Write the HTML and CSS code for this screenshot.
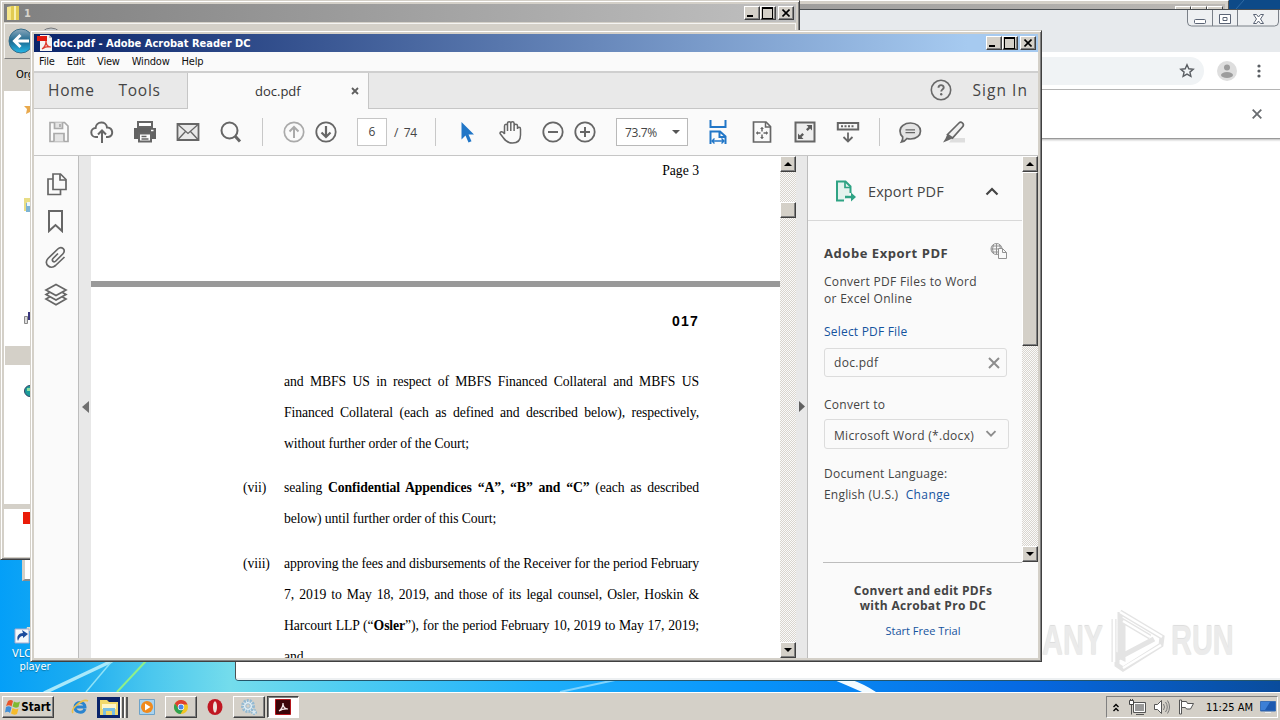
FILE: index.html
```html
<!DOCTYPE html>
<html lang="en">
<head>
<meta charset="utf-8">
<title>doc.pdf - Adobe Acrobat Reader DC</title>
<link rel="stylesheet" href="styles.css">
</head>
<body>
<main class="desktop">
  <svg class="wallpaper" width="1280" height="692" viewBox="0 0 1280 692">
    <defs>
      <linearGradient id="sky" x1="0" x2="1" y1="0" y2="0">
        <stop offset="0" stop-color="#049ff8"/><stop offset=".06" stop-color="#1cacf0"/><stop offset=".12" stop-color="#4cc8ee"/><stop offset=".18" stop-color="#74dcec"/><stop offset=".27" stop-color="#4fcdf2"/><stop offset=".42" stop-color="#1fb0fb"/><stop offset=".58" stop-color="#0895fb"/><stop offset=".8" stop-color="#0669e2"/><stop offset="1" stop-color="#0a4c9c"/>
      </linearGradient>
    </defs>
    <rect width="1280" height="692" fill="url(#sky)"/>
    <path d="M1229 0h51v12h-51z" fill="#0d4a88"/>
    <path d="M1236 9l8-9" stroke="#2f6ba5"/>
    <path d="M44 693L112 661" stroke="#a9e9fb" stroke-width="3.500"/>
    <path d="M86 692L112 661" stroke="#8fe2f7" stroke-width="1.500"/>
    <path d="M117 692L146 661" stroke="#8ff08a" stroke-width="2"/>
    <path d="M560 692l55-12" stroke="#7fd3fd" stroke-width="2"/>
    <path d="M834 680q10 4 28 12h14q-12-8-24-12z" fill="#f2fbff"/>
  </svg>

  <div class="vlc">
    <svg width="26" height="32" viewBox="0 0 26 32"><path d="M17 2l8-2v26h-9z" fill="#d98233"/><path d="M13 12h12v4H12z" fill="#e5e0d0"/><path d="M1 14h14v14H1z" fill="#f4f8fb" stroke="#aac"/><path d="M4 26c-2-5 1-8 5-8l-1-3 6 4-5 4v-2c-3 0-4 2-5 5z" fill="#1c4c9c"/></svg>
    <span>VLC media<br>player</span>
  </div>

  <section class="win back"><div class="back-title"><i></i><i></i><i></i></div></section>

  <section class="win chrome">
    <div class="chrome-tabs">
      <div class="aero">
        <svg width="92" height="17" viewBox="0 0 92 17"><path d="M.5 0v12q0 4 4 4h83q4 0 4-4V0M25.500 0v16M50.500 0v16" fill="#eef0f2" stroke="#7a8088"/><rect x="7.500" y="9.500" width="11" height="4" rx="1" fill="#fff" stroke="#5b6475"/><path d="M32.500 4.500h11v9h-11zM36 7.500h4v3h-4z" fill="#fff" stroke="#5b6475"/><path d="M66.500 4.500h3l2 2.500 2-2.500h3l-3 4.500 3 4.500h-3l-2-2.500-2 2.500h-3l3-4.500z" fill="#fff" stroke="#5b6475"/></svg>
      </div>
    </div>
    <div class="chrome-bar">
      <div class="omnibox"><svg width="16" height="16" viewBox="0 0 16 16"><path d="M8 1.800l1.800 4 4.400.4-3.300 2.900 1 4.300L8 11.100l-3.900 2.300 1-4.300-3.300-2.900 4.400-.4z" fill="none" stroke="#5a5e63" stroke-width="1.400"/></svg></div>
      <svg class="avatar" width="20" height="20" viewBox="0 0 20 20"><circle cx="10" cy="10" r="10" fill="#dedede"/><circle cx="10" cy="6.500" r="3" fill="#9c9c9c"/><ellipse cx="10" cy="14" rx="6" ry="3" fill="#9c9c9c"/></svg>
      <svg class="dots" width="4" height="16" viewBox="0 0 4 16" fill="#5a5e63"><circle cx="2" cy="3" r="1.600"/><circle cx="2" cy="8" r="1.600"/><circle cx="2" cy="13" r="1.600"/></svg>
    </div>
    <div class="infobar"><svg width="10" height="10" viewBox="0 0 10 10"><path d="M.7.7l8.600 8.600M9.300.7L.7 9.300" stroke="#696c70" stroke-width="1.800"/></svg></div>
    <div class="chrome-page"></div>
  </section>

  <section class="win third"></section>

  <section class="win explorer">
    <div class="ex-title">
      <svg width="14" height="16" viewBox="0 0 14 16"><path d="M1 2l5-1v14H1z" fill="#f6e68a"/><path d="M5 1h8v14H5z" fill="#e2cb52"/><path d="M8 1h2v14H8z" fill="#f8efae"/></svg>
      <span>1</span>
      <div class="ctl"><b class="min"></b><b class="max"></b><b class="cls"><svg width="8" height="8" viewBox="0 0 8 8"><path d="M.5.500l7 7M7.500.500l-7 7" stroke="#000" stroke-width="1.600"/></svg></b></div>
    </div>
    <div class="ex-nav"><svg width="56" height="32" viewBox="0 0 56 32"><defs><linearGradient id="orb" x2="0" y2="1"><stop offset="0" stop-color="#8aa7bb"/><stop offset=".5" stop-color="#1c688f"/><stop offset="1" stop-color="#25b9ea"/></linearGradient></defs><circle cx="46" cy="16" r="12" fill="#c3c9cd" stroke="#77797c"/><circle cx="16" cy="17" r="12" fill="url(#orb)" stroke="#356d8a"/><path d="M24 17H10M15.500 11L9.500 17l6 6" fill="none" stroke="#fff" stroke-width="3"/></svg></div>
    <div class="ex-cmd">Organize</div>
    <div class="ex-side">
      <svg class="e1" width="8" height="12" viewBox="0 0 8 12"><path d="M8 0L6 4 0 4l3 3-1 5 6-3z" fill="#e9a94c"/></svg>
      <svg class="e2" width="8" height="14" viewBox="0 0 8 14"><path d="M0 0h8v13H0z" fill="#e8dd86"/><path d="M2 5h6v9H2z" fill="#7db4d4"/><path d="M3 4h5v4H3z" fill="#eef7fb"/></svg>
      <svg class="e3" width="8" height="14" viewBox="0 0 8 14"><path d="M.5 5.500h3v7h-3z" fill="#ddd" stroke="#888"/><path d="M4 1h4v8H4z" fill="#39367e"/></svg>
      <div class="e4"></div>
      <svg class="e5" width="8" height="12" viewBox="0 0 8 12"><circle cx="6" cy="6" r="5.500" fill="#1b9a9a" stroke="#346"/><path d="M3 3h3v3H3z" fill="#8fe0a0"/></svg>
    </div>
    <div class="ex-detail"><i></i></div>
  </section>

  <section class="win acrobat">
    <div class="ac-title">
      <svg width="16" height="16" viewBox="0 0 16 16"><path d="M3 0h9l3 3v13H3z" fill="#f4f2f1"/><path d="M12 0v3h3z" fill="#bbb"/><path d="M0 1h10v5H0z" fill="#e1190d"/><path d="M5 14c3-2 4-5 4-8 0 4 2 6 5 6-4-1-6 0-9 2z" fill="none" stroke="#e03a2c" stroke-width="1.200"/></svg>
      <span>doc.pdf - Adobe Acrobat Reader DC</span>
      <div class="ctl"><b class="min"></b><b class="max"></b><b class="cls"><svg width="8" height="8" viewBox="0 0 8 8"><path d="M.5.500l7 7M7.500.500l-7 7" stroke="#000" stroke-width="1.600"/></svg></b></div>
    </div>
    <nav class="menu"><span>File</span><span>Edit</span><span>View</span><span>Window</span><span>Help</span></nav>
    <div class="tabs">
      <div class="home"><span>Home</span><span>Tools</span></div>
      <div class="tab"><span>doc.pdf</span><svg width="8" height="8" viewBox="0 0 8 8"><path d="M1 1l6 6M7 1L1 7" stroke="#5f5f5f" stroke-width="1.800"/></svg></div>
      <div class="signin"><svg width="22" height="22" viewBox="0 0 22 22"><circle cx="11" cy="11" r="9.700" fill="none" stroke="#696969" stroke-width="1.600"/><path d="M8.500 8.700c0-3.400 5.200-3.300 5.200-.3 0 2-2.500 2-2.500 4.200" fill="none" stroke="#696969" stroke-width="1.900"/><circle cx="11.200" cy="15.200" r="1.200" fill="#696969"/></svg><span>Sign In</span></div>
    </div>
    <div class="tools">
      <svg viewBox="0 0 24 24" class="lite"><path d="M3 2.500h14.500L21 6v15.500H3z"/><path d="M7.500 2.500v6h8v-6M7 21.500v-8h10v8" fill="#e4e4e4"/><path d="M13 4v3"/></svg>
      <svg viewBox="0 0 24 24" class="bold"><path d="M8 17H6a4.500 4.500 0 0 1-.4-9C6 1 16.500.800 17 7.500c6.500-.5 7 9.500 1 9.500h-2M12 23V11M8 14.500l4-4 4 4"/></svg>
      <svg viewBox="0 0 24 24"><path d="M5 2h14v5H5z" fill="#fff" stroke-width="2"/><path d="M1 8h22v11H1z" fill="#626262" stroke="none"/><path d="M6 13.500h12v8H6z" fill="#fff" stroke-width="2"/><path d="M8.500 16.500h5M8.500 19h7"/><path d="M18 10.500h2.500" stroke="#fff"/></svg>
      <svg viewBox="0 0 24 24"><path d="M1.500 4h21v16h-21z" fill="#e9e9e9" stroke-width="1.800"/><path d="M2 4.500l10 9 10-9M2 19.500l7.500-8M22 19.500l-7.500-8" stroke-width="1.300"/></svg>
      <svg viewBox="0 0 24 24"><circle cx="10.500" cy="10.500" r="8" stroke-width="2"/><path d="M16 16l5 5.500" stroke-width="3"/></svg>
      <hr>
      <svg viewBox="0 0 24 24" class="lite"><circle cx="12" cy="12" r="9.700"/><path d="M12 18V7M7.500 11.500L12 7l4.500 4.500" stroke-width="2"/></svg>
      <svg viewBox="0 0 24 24" class="g8"><circle cx="12" cy="12" r="9.700" stroke-width="1.800"/><path d="M12 6v11M7.500 12.500L12 17l4.500-4.500" stroke-width="2.200"/></svg>
      <div class="pageno">6</div>
      <div class="total">/&nbsp; 74</div>
      <hr class="g11">
      <svg viewBox="0 0 24 24"><path d="M6.500 2v17.500l4-4 3 7 3-1.300-3-6.700h5.500z" fill="#2176c7" stroke="none"/></svg>
      <svg viewBox="0 0 24 24"><path d="M6.500 14V6c0-2.400 3-2.400 3 0v5V3.500c0-2.400 3.300-2.400 3.300 0V11 3.500c0-2.200 3.300-2.200 3.300 0V11 6c0-2.200 3.400-2.200 3.400 0v3c0-2.200 3-2.200 3 0v6C22.500 21 19 23 14.500 23c-5 0-7-2-9-5L2 13.500c0-2.500 3-2.300 4.500.5z"/></svg>
      <svg viewBox="0 0 24 24"><circle cx="12" cy="12" r="9.700" stroke-width="1.800"/><path d="M7 12h10" stroke-width="2"/></svg>
      <svg viewBox="0 0 24 24" class="g8"><circle cx="12" cy="12" r="9.700" stroke-width="1.800"/><path d="M7 12h10M12 7v10" stroke-width="2"/></svg>
      <div class="zoombox"><span>73.7%</span><svg viewBox="0 0 8 4"><path d="M0 0h8L4 4z" fill="#555" stroke="none"/></svg></div>
      <svg viewBox="0 0 24 24" class="blue"><path d="M4.500 0v7h15V0M4.500 24V11.500h9.500l5.500 5V24M13.500 11.500v5.500h6"/><path d="M6.500 21h11M8.500 18.500L6 21l2.500 2.500M15.500 18.500L18 21l-2.500 2.500" stroke-width="1.400"/></svg>
      <svg viewBox="0 0 24 24" class="g20"><path d="M3.500 2h12.500l4.500 4.500V22h-17z" stroke-width="1.700"/><path d="M15.500 2v5h5" /><path d="M12 7.500v11M6.500 13h11" stroke-dasharray="4 3"/><path d="M10 9l2-2 2 2zM10 17l2 2 2-2zM8 11l-2 2 2 2zM16 11l2 2-2 2z" fill="#666" stroke="none"/></svg>
      <svg viewBox="0 0 24 24"><path d="M2.500 2.500h19v19h-19z" fill="#eee" stroke-width="2"/><path d="M13.500 5H19v5.500l-1.900-1.900-2.400 2.400-1.700-1.700 2.400-2.400zM10.500 19H5v-5.500l1.900 1.900 2.400-2.400 1.700 1.700-2.400 2.400z" fill="#5a5a5a" stroke="none"/></svg>
      <svg viewBox="0 0 24 24"><path d="M1.800 3h20.400v6.500H1.800z" stroke-width="2"/><path d="M5 6.200h14" stroke-dasharray="2 1.500" stroke-width="2"/><path d="M12 12.500V21M7.500 17l4.500 4.500 4.500-4.500" stroke-width="1.800"/></svg>
      <hr>
      <svg viewBox="0 0 24 24" class="g18"><path d="M12.500 3c6 0 10 3.500 10 8s-4 8-10 8c-1.500 0-2.500-.2-3.500-.5-1.500 2-3.500 3.200-5.500 3.500 1-1.500 1.500-3 1.200-5C3 15.500 2 13.500 2 11c0-4.500 4.500-8 10.500-8z" fill="#e4e4e4" stroke-width="1.700"/><path d="M7.500 9.800h9.500M7.500 12.600h9.500" stroke-width="1.300"/></svg>
      <svg viewBox="0 0 24 24" class="g20"><path d="M10 18h13v4.500H7z" fill="#dedede" stroke="none"/><path d="M5.500 14.500L17 3c2-2 5.500.5 4 3.300L10.500 18z" fill="#f1f1f1" stroke-width="1.700"/><path d="M5.200 14.500l5 4L6 20.500l-5 2 2.500-4z" fill="#666" stroke="none"/></svg>
    </div>
    <div class="body">
      <aside class="rail">
        <svg viewBox="0 0 24 24"><path d="M9 2h7.500L22 7.500v10H9z"/><path d="M16 2v6h6M9 7H4v15.500h12.500v-5"/></svg>
        <svg viewBox="0 0 24 24"><path d="M5 2h13v20l-6.500-6L5 22z" stroke-width="2"/></svg>
        <svg viewBox="0 0 24 24"><path d="M14 7.500l-5 5c-2 2 .8 4.500 2.800 2.500l7-7c4-4-1.300-8.500-5-5L4 12.500c-5 5.500 2.500 11.500 7.500 7L20.500 11"/></svg>
        <svg viewBox="0 0 24 24"><path d="M12 1.500L22 7l-10 5.500L2 7z"/><path d="M5.500 9.500L2 11.500l10 5.500 10-5.500-3.500-2M5.500 14L2 16l10 5.700L22 16l-3.500-2"/></svg>
      </aside>
      <div class="grip"><svg width="7" height="12" viewBox="0 0 7 12"><path d="M7 0v12L0 6z" fill="#707070"/></svg></div>
      <article class="doc">
        <div class="page first"><p class="head">Page 3</p></div>
        <div class="page second">
          <p class="num">017</p>
          <div class="item"><span></span><div>
            <p class="j">and MBFS US in respect of MBFS Financed Collateral and MBFS US</p>
            <p class="j">Financed Collateral (each as defined and described below), respectively,</p>
            <p>without further order of the Court;</p></div></div>
          <div class="item"><span>(vii)</span><div>
            <p class="j">sealing <strong>Confidential Appendices “A”, “B” and “C”</strong> (each as described</p>
            <p>below) until further order of this Court;</p></div></div>
          <div class="item"><span>(viii)</span><div>
            <p class="j tight">approving the fees and disbursements of the Receiver for the period February</p>
            <p class="j">7, 2019 to May 18, 2019, and those of its legal counsel, Osler, Hoskin &amp;</p>
            <p class="j">Harcourt LLP (“<strong>Osler</strong>”), for the period February 10, 2019 to May 17, 2019;</p>
            <p>and</p></div></div>
        </div>
      </article>
      <div class="scroll"><b><svg width="8" height="4" viewBox="0 0 8 4"><path d="M0 4h8L4 0z"/></svg></b><i class="thumb"></i><b><svg width="8" height="4" viewBox="0 0 8 4"><path d="M0 0h8L4 4z"/></svg></b></div>
      <div class="grip right"><svg width="6" height="11" viewBox="0 0 6 11"><path d="M0 0v11l6-5.500z" fill="#606060"/></svg></div>
      <aside class="export">
        <div class="ex-top">
          <div class="ex-main">
            <header>
              <svg width="24" height="24" viewBox="0 0 24 24"><path d="M10 21.500H3v-19h8.500l5 5V14" fill="#e4f3ee" stroke="#2fa384" stroke-width="2"/><path d="M11 3v5.500h5.500" fill="none" stroke="#2fa384" stroke-width="1.700"/><path d="M11 18h8" fill="none" stroke="#2fa384" stroke-width="2.500"/><path d="M17 13.500l5 4.500-5 4.500z" fill="#2fa384"/></svg>
              <h2>Export PDF</h2>
              <svg width="14" height="9" viewBox="0 0 14 9"><path d="M1.500 7.500L7 2l5.500 5.500" fill="none" stroke="#444" stroke-width="2.200"/></svg>
            </header>
            <div class="ex-form">
              <div class="row1"><h3>Adobe Export PDF</h3><svg width="18" height="16" viewBox="0 0 18 16" fill="none" stroke="#929292"><circle cx="6.500" cy="6" r="5.500"/><path d="M1 6h11M6.500.500v11M3.500 1.500q-2 4.500 0 9M9.500 1.500q2 4.500 0 9M2 3h9M2 9h9"/><path d="M8.500 5.500h4l4 4v6h-8z" fill="#fafafa"/><path d="M12.500 5.500v4h4"/></svg></div>
              <p class="desc">Convert PDF Files to Word<br>or Excel Online</p>
              <a>Select PDF File</a>
              <div class="field"><span>doc.pdf</span><svg width="12" height="12" viewBox="0 0 12 12"><path d="M1 1l10 10M11 1L1 11" stroke="#8d8d8d" stroke-width="2"/></svg></div>
              <p class="lbl">Convert to</p>
              <div class="field sel"><span>Microsoft Word (*.docx)</span><svg width="12" height="8" viewBox="0 0 12 8"><path d="M1.500 1.200L6 5.700l4.500-4.500" fill="none" stroke="#8d8d8d" stroke-width="1.900"/></svg></div>
              <p class="lbl2">Document Language:</p>
              <p class="lang">English (U.S.) <a>Change</a></p>
            </div>
          </div>
          <div class="scroll side"><b><svg width="8" height="4" viewBox="0 0 8 4"><path d="M0 4h8L4 0z"/></svg></b><i class="thumb"></i><b><svg width="8" height="4" viewBox="0 0 8 4"><path d="M0 0h8L4 4z"/></svg></b></div>
        </div>
        <footer><strong>Convert and edit PDFs<br>with Acrobat Pro DC</strong><a>Start Free Trial</a></footer>
      </aside>
    </div>
  </section>

  <div class="mark">
    <span>ANY</span>
    <svg width="58" height="66" viewBox="0 0 58 66"><path d="M12 4l42 25-1 8-38 24-6-4V47l6 3V13l27 16M6 11v43M12 4v45l34-18" fill="none" stroke="#e4e4e4" stroke-width="5"/><path d="M12 4l42 25M15 13l27 16M6 11v43M15 60l38-23" fill="none" stroke="#fff" stroke-width="2.500"/></svg>
    <span>RUN</span>
  </div>
</main>

<footer class="taskbar">
  <div class="btn start"><svg width="16" height="16" viewBox="0 0 16 16"><path d="M3 2q3-2 5 0L6.500 7.500q-2-2-5.500-.5z" fill="#e8552a"/><path d="M9 2.500q3 2 6 0L13.500 8q-3 1.500-6-.5z" fill="#7fb932"/><path d="M1 8q3-1.500 5.500.5L5 14q-2-2-5-.5z" fill="#3f8fd8"/><path d="M7.500 9q3 2 6 .5L12 15q-3 1.500-6-.5z" fill="#f5bb2c"/></svg>Start</div>
  <svg class="ie" width="18" height="18" viewBox="0 0 18 18"><path d="M14 11c-2 5-10 4-10-2s10-6 10 0H5" fill="none" stroke="#2a84cf" stroke-width="3"/><path d="M2 15C-1 11 12 0 17 3" fill="none" stroke="#ecc04a" stroke-width="1.600"/></svg>
  <div class="stack"><div class="folder"><svg width="18" height="16" viewBox="0 0 18 16"><path d="M0 1h7l2 2h9v13H0z" fill="#f2d96b"/><path d="M2 5h14v5H2z" fill="#fff6c8"/><path d="M3 9h12v7h-3v-4H6v4H3z" fill="#79bfe4"/></svg></div><i></i><i></i></div>
  <svg class="wmp" width="16" height="18" viewBox="0 0 16 18"><path d="M.5 1.500h15v15H.500z" fill="#a9d3ef" stroke="#6da3c9"/><circle cx="8" cy="9" r="6" fill="#f08a1d"/><path d="M6 5.500v7L11.500 9z" fill="#fff"/></svg>
  <div class="btn app b1"><svg width="16" height="16" viewBox="0 0 16 16"><circle cx="8" cy="8" r="7" fill="#f2c522"/><path d="M1.900 4.500A7 7 0 0 1 14.500 5.500H8L5.500 10z" fill="#de3f31"/><path d="M1.900 4.500a7 7 0 0 0 5.600 10.500L10.500 10 5.500 9.500z" fill="#2ea250"/><circle cx="8" cy="8" r="3.200" fill="#fff"/><circle cx="8" cy="8" r="2.500" fill="#4a86e8"/></svg></div>
  <svg class="opera" width="16" height="18" viewBox="0 0 16 18"><ellipse cx="8" cy="9" rx="7.500" ry="8" fill="#c01722"/><ellipse cx="8" cy="9" rx="2" ry="5.800" fill="#eee3dc"/></svg>
  <div class="btn app b2"><svg width="18" height="18" viewBox="0 0 18 18"><circle cx="8" cy="8" r="5.500" fill="#e0edf4" stroke="#93b9d2" stroke-width="3" stroke-dasharray="2 1"/><circle cx="8" cy="8" r="2.200" fill="#d4d0c8" stroke="#9cbdd3"/><circle cx="14" cy="14" r="2.300" fill="#dce9f1" stroke="#93b9d2" stroke-width="1.500" stroke-dasharray="1.500 1"/></svg></div>
  <div class="btn app on"><svg width="16" height="16" viewBox="0 0 16 16"><path d="M.5.500h15v15H.5z" fill="#3a0609" stroke="#b3151b"/><path d="M4 12c3-2 4-5 4-8 0 4 2 6 5 6-4-.5-6 0-9 2z" fill="none" stroke="#f3e9e9" stroke-width="1.200"/></svg></div>
  <div class="tray">
    <svg width="6" height="9" viewBox="0 0 6 9"><path d="M.5 4L3 1.500 5.500 4M.5 8L3 5.500 5.500 8" fill="none" stroke="#000" stroke-width="1.400"/></svg>
    <svg width="17" height="16" viewBox="0 0 17 16"><path d="M5.500 4.500h10v8h-10z" fill="#999" stroke="#fff"/><path d="M4.500 3.500h12v10h-12zM7 15.500h8M2.500 6v9.500" fill="none" stroke="#555"/><path d="M.5 1.500h4v4h-4zM1.500 0v2M3.500 0v2" fill="#fff" stroke="#444"/></svg>
    <svg width="16" height="16" viewBox="0 0 16 16"><path d="M.5 5.500h3l4-4v13l-4-4h-3z" fill="#fff" stroke="#555"/><path d="M9.500 5q2 3 0 6M11.500 3q3.500 5 0 10M13.500 1.500q4 6.500 0 13" fill="none" stroke="#777"/></svg>
    <svg width="16" height="16" viewBox="0 0 16 16"><path d="M1.500 1h2v14h-2z" fill="#fff" stroke="#555"/><path d="M3.500 2.500h5l1 2h6l-3 5.500h-4l-1-1.500h-4z" fill="#fff" stroke="#555"/></svg>
    <span>11:25 AM</span>
    <svg width="16" height="12" viewBox="0 0 16 12"><path d="M.5.500h15v9.500H.500z" fill="#1c59b0" stroke="#3a6fb5"/><path d="M1 1h9L5 9H1z" fill="#3c7fd6"/><path d="M5 11.500h6" stroke="#eee"/></svg>
  </div>
</footer>
</body>
</html>
```
FILE: styles.css
```css
* { box-sizing: border-box; }
body { margin: 0; width: 1280px; height: 720px; overflow: hidden; display: flex; flex-direction: column; background: #d4d0c8; font-family: "Open Sans", "Noto Sans", sans-serif; }
p, h2, h3 { margin: 0; font-weight: 400; }
svg { display: block; flex: none; }

/* Desktop and windows */
.desktop { position: relative; height: 692px; overflow: hidden; }
.wallpaper { position: absolute; inset: 0; }
.win { position: absolute; display: flex; flex-direction: column; overflow: hidden; }
.vlc { position: absolute; left: 12px; top: 627px; width: 46px; color: #fff; font: 11px/13px "DejaVu Sans Condensed", "DejaVu Sans", sans-serif; text-align: center; white-space: nowrap; }
.vlc svg { margin-bottom: -12px; margin-left: 2px; position: relative; top: -12px; }
.vlc span { display: block; text-shadow: 0 1px 1px #0457; }

.back { left: 600px; top: 0; width: 629px; height: 300px; background: #d4d0c8; border-top: 1px solid #fff; border-right: 1px solid #555; padding: 3px 3px 0 0; }
.back-title { height: 18px; background: linear-gradient(90deg, #909090, #bdbab6); display: flex; justify-content: flex-end; padding: 2px 2px 0; }
.back-title i { width: 16px; height: 14px; background: #d4d0c8; border: 1px solid #444; border-left-color: #fff; border-top-color: #fff; }

.chrome { left: 235px; top: 9px; width: 1050px; height: 672px; background: #fff; border: 1px solid #4b4f52; border-radius: 0 0 4px 4px; border-bottom: 1px solid #24556a; }
.chrome-tabs { height: 42px; background: #e7eaed; display: flex; justify-content: flex-end; padding-right: 5px; flex: none; }
.chrome-bar { height: 38px; border-bottom: 1px solid #b4b4b4; display: flex; align-items: center; flex: none; }
.omnibox { width: 890px; margin-left: 78px; height: 28px; border-radius: 14px; background: #f0f3f5; display: flex; align-items: center; justify-content: flex-end; padding-right: 9px; }
.avatar { margin-left: 13px; }
.dots { margin-left: 20px; }
.infobar { height: 49px; flex: none; border-bottom: 1px solid #999; box-shadow: 0 1px 2px #bbb; display: flex; align-items: center; justify-content: flex-end; padding-right: 22px; }
.chrome-page { flex: 1; border-bottom: 2px solid #edf0f2; margin-top: 2px; }

.third { left: 22px; top: 540px; width: 40px; height: 41px; background: #fff; border: 1px solid #777; border-left: 3px solid #d4d0c8; border-bottom: 2px solid #8a8a8a; }

.explorer { left: 0; top: 0; width: 800px; height: 560px; background: #d4d0c8; border: 1px solid #d4d0c8; border-right: 1px solid #404040; border-bottom: 1px solid #404040; padding: 0 3px; box-shadow: inset 1px 1px #fff, inset -1px -1px #808080; }
.ex-title { flex: none; height: 18px; margin-top: 3px; background: linear-gradient(90deg, #808080, #c0c0c0); display: flex; align-items: center; gap: 4px; color: #d8d4cc; font: bold 11px "DejaVu Sans Condensed", sans-serif; padding: 0 2px; }
.ctl { margin-left: auto; display: flex; }
.ctl b { width: 16px; height: 14px; background: #d4d0c8; border: 1px solid #404040; border-top-color: #fff; border-left-color: #fff; box-shadow: inset -1px -1px #808080; display: flex; align-items: center; justify-content: center; padding: 0 1px 1px 0; }
.ctl .cls { margin-left: 2px; }
.ctl .min::before { content: ""; width: 6px; height: 2px; background: #000; align-self: flex-end; margin: 0 3px 1px 0; }
.ctl .max::before { content: ""; width: 9px; height: 9px; border: 1px solid #000; border-top-width: 2px; }
.ex-nav { flex: none; height: 36px; border: 1px solid #f5f4f2; margin-top: 1px; border-bottom-color: #808080; }
.ex-cmd { flex: none; height: 32px; padding: 9px 12px; font: 11px/14px "DejaVu Sans Condensed", sans-serif; }
.ex-side { background: #fff; height: 413px; flex: none; display: flex; flex-direction: column; padding-left: 20px; }
.e1 { margin-top: 11px; } .e2 { margin-top: 84px; } .e3 { margin-top: 99px; }
.e4 { margin: 21px 0 0 -19px; width: 60px; height: 19px; background: #d4d0c8; }
.e5 { margin-top: 20px; }
.ex-detail { flex: none; height: 53px; background: #fff; border-top: 5px solid #d4d0c8; padding: 3px 0 0 19px; }
.ex-detail i { display: block; width: 14px; height: 12px; background: #ea1b08; }

/* Acrobat Reader */
.acrobat { left: 30px; top: 30px; width: 1012px; height: 632px; background: #d4d0c8; border: 1px solid #d4d0c8; border-right: 1px solid #404040; border-bottom: 1px solid #404040; padding: 3px 3px 3px; box-shadow: inset 1px 1px #fff, inset -1px -1px #808080; color: #444; }
.ac-title { flex: none; height: 18px; background: linear-gradient(90deg, #0a246a, #a6caf0 93%); display: flex; align-items: center; padding: 0 2px 0 3px; color: #fff; font: bold 11px "DejaVu Sans Condensed", sans-serif; }
.menu { flex: none; height: 21px; background: #fafafa; border-bottom: 2px solid #cfcfcf; padding-left: 5px; display: flex; gap: 12px; color: #111; font: 11px/20px "DejaVu Sans Condensed", sans-serif; letter-spacing: -.2px; }
.tabs { flex: none; height: 36px; display: flex; background: #e9e9e9; font-size: 15.500px; }
.home { width: 154px; border: 1px solid #c6c6c6; border-width: 0 1px 1px 0; padding: 0 0 1px 14px; display: flex; gap: 24px; align-items: center; letter-spacing: .7px; }
.tab { width: 180px; background: #fafafa; display: flex; align-items: center; padding: 0 9px 0 67px; justify-content: space-between; font-size: 13px; color: #333; }
.signin { flex: 1; border: 1px solid #c6c6c6; border-width: 0 0 1px 1px; display: flex; align-items: center; justify-content: flex-end; gap: 20px; padding: 0 10px 1px 0; letter-spacing: 1.050px; }
.tools { flex: none; height: 47px; background: #fafafa; border-bottom: 1px solid #c6c6c6; padding-left: 13px; display: flex; align-items: center; gap: 19px; }
.tools svg { width: 24px; height: 24px; fill: none; stroke: #666; stroke-width: 1.500; }
.tools .lite { stroke: #aaa; stroke-width: 1.700; }
.tools .bold { stroke-width: 2; }
.tools .blue { stroke: #2176c7; stroke-width: 2; margin-left: -1px; }
.tools hr { width: 1px; height: 28px; border: 0; margin: 0; background: #c8c8c8; }
.tools .g8 { margin-left: -11px; }
.tools .g11 { margin-left: -8px; }
.tools .g18 { margin-left: -1px; }
.tools .g20 { margin-left: 1px; }
.pageno { width: 30px; height: 28px; border: 1px solid #c6c6c6; background: #fff; font-size: 12px; line-height: 26px; text-align: center; }
.total { width: 30px; margin-left: -12px; font-size: 12px; white-space: nowrap; letter-spacing: -.3px; }
.zoombox { width: 72px; height: 28px; border: 1px solid #b9b9b9; background: #fff; display: flex; align-items: center; justify-content: space-between; padding: 0 7px 0 8px; font-size: 12px; letter-spacing: -.4px; }
.tools .zoombox svg { width: 8px; height: 4px; }
.body { flex: 1; min-height: 0; display: grid; grid-template-columns: 44px 13px 689px 16px 12px 230px; }
.rail { background: #fafafa; padding: 16px 0 0 10px; display: flex; flex-direction: column; gap: 13px; }
.rail svg { width: 24px; height: 24px; fill: none; stroke: #666; stroke-width: 1.700; }
.grip { background: #e8e8e8; border-left: 1px solid #bdbdbd; display: flex; justify-content: center; padding-top: 245px; }
.grip.right { border-left: 0; border-right: 1px solid #bdbdbd; }
.doc { background: #999; overflow: hidden; color: #000; font: 13.700px/31px "Liberation Serif", serif; display: flex; flex-direction: column; }
.page { background: #fff; padding: 0 81px 0 152px; }
.first { height: 125px; flex: none; text-align: right; }
.head { line-height: 29px; }
.second { flex: none; margin-top: 6px; height: 420px; }
.num { font: bold 14px/20px "Liberation Sans", sans-serif; letter-spacing: 1.200px; text-align: right; padding-top: 24px; margin-bottom: 35px; }
.item { display: grid; grid-template-columns: 41px 415px; margin-bottom: 13px; white-space: nowrap; letter-spacing: -.09px; }
.item + .item + .item { margin-top: 14px; }
.j { text-align-last: justify; }
.tight { letter-spacing: -.125px; }
.scroll { background: repeating-conic-gradient(#d9d5ce 0 25%, #fafafa 0 50%) 0 0 / 2px 2px; display: flex; flex-direction: column; justify-content: space-between; }
.scroll b, .thumb { display: block; height: 16px; background: #d4d0c8; border: 1px solid #404040; border-top-color: #fff; border-left-color: #fff; box-shadow: inset -1px -1px #808080; }
.scroll b { display: flex; align-items: center; justify-content: center; }
.scroll .thumb { margin: 30px 0 auto; }
.side { width: 16px; }
.side .thumb { height: 174px; margin: 0 0 auto; }
.export { background: #fafafa; display: flex; flex-direction: column; font-size: 12px; }
.ex-top { height: 406px; display: flex; }
.ex-main { width: 214px; }
.ex-main header { height: 65px; padding: 6px 23px 0 26px; display: flex; align-items: center; border-bottom: 1px solid #d8d8d8; }
.ex-main h2 { font-size: 14.500px; margin-left: 10px; letter-spacing: .1px; flex: 1; }
.ex-form { padding: 22px 0 0 16px; height: 342px; border-bottom: 1px solid #bdbdbd; border-image: linear-gradient(90deg, transparent 16px, #bdbdbd 16px) 1; }
.row1 { display: flex; justify-content: space-between; padding-right: 14px; height: 20px; }
.row1 h3 { font-weight: 700; font-size: 13px; line-height: 20px; letter-spacing: .55px; }
.desc { line-height: 17px; margin-top: 10px; letter-spacing: .3px; }
.export a { color: #15539e; }
.ex-form > a { display: block; line-height: 18px; margin-top: 16px; letter-spacing: .2px; }
.field { width: 183px; height: 29px; margin-top: 7px; border: 1px solid #dcdcdc; border-radius: 3px; display: flex; align-items: center; justify-content: space-between; padding: 0 6px 0 9px; letter-spacing: .3px; }
.lbl { line-height: 18px; margin-top: 19px; letter-spacing: .25px; }
.sel { width: 185px; height: 30px; margin-top: 5px; padding-right: 11px; }
.sel span { padding-top: 2px; }
.lbl2 { line-height: 18px; margin-top: 16px; letter-spacing: .25px; }
.lang { line-height: 18px; margin-top: 3px; letter-spacing: .2px; }
.lang a { margin-left: 4px; letter-spacing: .4px; }
.export footer { text-align: center; padding-top: 21px; line-height: 15px; }
.export footer strong { display: block; letter-spacing: .3px; }
.export footer a { display: block; margin-top: 10px; font-size: 11px; }

.mark { position: absolute; left: 1042px; top: 608px; display: flex; align-items: center; gap: 5px; font: bold 42px/60px "Liberation Sans", sans-serif; color: #ebebeb; }
.mark span { display: block; transform: scaleX(.69); transform-origin: 0 50%; width: 61px; text-shadow: 0 -1px 1px #dcdcdc; }

/* Taskbar */
.taskbar { height: 28px; border-top: 1px solid #fff; background: #d4d0c8; display: flex; align-items: center; padding: 1px 2px 0; font: 11px "DejaVu Sans Condensed", sans-serif; color: #000; }
.btn { height: 22px; border: 1px solid #404040; border-top-color: #fff; border-left-color: #fff; box-shadow: inset -1px -1px #808080; display: flex; align-items: center; justify-content: center; }
.start { width: 52px; font-weight: 700; gap: 0; font-size: 11.500px; }
.ie { margin-left: 17px; }
.stack { display: flex; margin-left: 8px; }
.folder { width: 23px; height: 21px; background: #0a246a; display: flex; align-items: center; justify-content: center; }
.stack i { width: 4px; height: 21px; border-right: 2px solid #555; border-left: 1px solid #fff; }
.wmp { margin-left: 11px; }
.app { width: 32px; }
.b1 { margin-left: 10px; }
.opera { margin-left: 10px; }
.b2 { margin-left: 10px; }
.on { margin-left: 2px; background: #fff; border-color: #404040 #fff #fff #404040; box-shadow: inset 1px 1px #808080; }
.tray { margin-left: auto; width: 172px; height: 22px; border: 1px solid #fff; border-top-color: #808080; border-left-color: #808080; display: flex; align-items: center; gap: 8px; padding: 0 1px 0 6px; white-space: nowrap; }
.tray span { margin-left: 4px; letter-spacing: 0; }
.tray svg:first-child { margin-right: 2px; }
.tray svg:last-child { margin-left: -1px; }
```
